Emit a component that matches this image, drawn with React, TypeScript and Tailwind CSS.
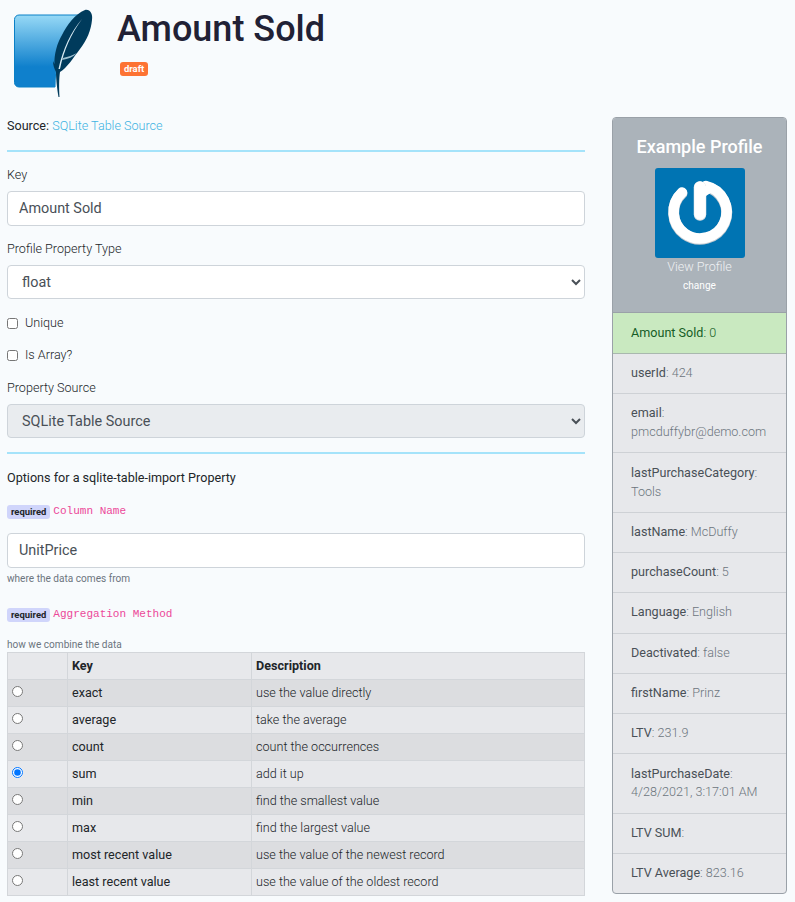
import React from "react"

const methods = [
  { key: "exact", description: "use the value directly" },
  { key: "average", description: "take the average" },
  { key: "count", description: "count the occurrences" },
  { key: "sum", description: "add it up" },
  { key: "min", description: "find the smallest value" },
  { key: "max", description: "find the largest value" },
  { key: "most recent value", description: "use the value of the newest record" },
  { key: "least recent value", description: "use the value of the oldest record" },
]

const properties = [
  { name: "userId", value: "424" },
  { name: "email", value: "pmcduffybr@demo.com" },
  { name: "lastPurchaseCategory", value: "Tools" },
  { name: "lastName", value: "McDuffy" },
  { name: "purchaseCount", value: "5" },
  { name: "Language", value: "English" },
  { name: "Deactivated", value: "false" },
  { name: "firstName", value: "Prinz" },
  { name: "LTV", value: "231.9" },
  { name: "lastPurchaseDate", value: "4/28/2021, 3:17:01 AM" },
  { name: "LTV SUM", value: "" },
  { name: "LTV Average", value: "823.16" },
]

const SqliteLogo = () => (
  <svg width="80" height="98" viewBox="0 0 80 98" className="block shrink-0">
    <defs>
      <linearGradient id="sq" x1="0" y1="0" x2="0" y2="1">
        <stop offset="0" stopColor="#97d9f6" />
        <stop offset="0.72" stopColor="#0f80cc" />
        <stop offset="1" stopColor="#0f80cc" />
      </linearGradient>
    </defs>
    <path
      d="M6 15H66C56 28 47 42 44 60C43 68 42 78 42 87H6A4.500 4.500 0 0 1 1.500 82.500V19.500A4.500 4.500 0 0 1 6 15z"
      fill="url(#sq)"
      stroke="#0b80c6"
      strokeWidth="1"
    />
    <path
      d="M72 10C77 9 80 14 79 20C78 30 74 40 67 49C60 58 54 68 47 72C46 78 46 88 46.500 97H45.500C44 88 43 78 43 72C41 68 40 65 40 61L41.500 64C41 55 44 43 49 35C54 25 62 14 72 10z"
      fill="#003b5c"
    />
    <path d="M69 19C58 32 50 48 45.500 69L47 69C51 50 58 34 69 19z" fill="#d9ecf4" />
    <path d="M50 58C55 57 60 55 64 53C60 57 55 59 49 60z" fill="#9fc2d2" />
  </svg>
)

const GrouparooLogo = () => (
  <div className="h-[90px] w-[90px] rounded-[3px] bg-[#0074b3]">
    <svg width="90" height="90" viewBox="0 0 90 90" fill="none" strokeLinecap="round">
      <path d="M27 24.500A26.500 26.500 0 1 0 51 18" stroke="#c3cad0" strokeWidth="11" transform="translate(0 0.800)" />
      <path d="M27 24.500A26.500 26.500 0 1 0 51 18" stroke="#ffffff" strokeWidth="10.500" />
      <path d="M45 19V46" stroke="#dfe3e6" strokeWidth="12.500" transform="translate(0 0.500)" />
      <path d="M45 19V46" stroke="#ffffff" strokeWidth="11.500" />
      <path d="M48 18L50 29C52 27 55 25 58 24L54 18z" fill="#ffffff" />
    </svg>
  </div>
)

const Required = ({ name }: { name: string }) => (
  <div className="flex h-[21px] items-center">
    <span className="rounded-[3px] bg-[#d0d5fb] px-[4px] text-[9.450px] leading-[14px] font-bold text-[#212529]">
      required
    </span>
    <code className="ml-[3px] font-['Liberation_Mono',monospace] text-[11.025px] text-[#ec4899]">
      {name}
    </code>
  </div>
)

const inputClass =
  "block h-[35px] w-full rounded-[4px] border border-[#ced4da] bg-white px-[11px] text-[14.400px] text-[#495057]"

const selectClass =
  "block h-[34px] w-full rounded-[4px] border border-[#ced4da] px-[10px] text-[14.400px] text-[#495057]"

export default function App() {
  return (
    <div className="h-[902px] overflow-hidden bg-[#f8fbfd] font-['Roboto',sans-serif] text-[12.600px] text-[#212529]">
      {/* Header */}
      <div className="flex h-[106px] pl-[13px]">
        <SqliteLogo />
        <div className="ml-[24px] pt-[7px]">
          <h1 className="text-[36px] leading-[44px] font-medium text-[#212135]">Amount Sold</h1>
          <span className="mt-[11px] ml-[3px] inline-block rounded-[3px] bg-[#fd7333] px-[4px] text-[9.450px] leading-[14px] font-bold text-white">
            draft
          </span>
        </div>
      </div>

      <div className="flex items-start">
        {/* Form */}
        <div className="ml-[7px] w-[578px]">
          <p className="mt-[9px] leading-[21px]">
            Source: <a className="font-light text-[#3fb3e2]">SQLite Table Source</a>
          </p>
          <hr className="mt-[14px] border-t-2 border-[#a5e3fa]" />

          <label className="mt-[13px] block leading-[20px] font-light">Key</label>
          <input className={`mt-[6px] ${inputClass}`} defaultValue="Amount Sold" />

          <label className="mt-[13px] block leading-[20px] font-light">Profile Property Type</label>
          <select className={`mt-[6px] bg-white ${selectClass}`} defaultValue="float">
            <option>float</option>
          </select>

          <label className="mt-[14px] flex h-[20px] items-center font-light">
            <input type="checkbox" className="m-0 h-[11px] w-[11px]" />
            <span className="ml-[7px]">Unique</span>
          </label>
          <label className="mt-[12px] flex h-[20px] items-center font-light">
            <input type="checkbox" className="m-0 h-[11px] w-[11px]" />
            <span className="ml-[7px]">Is Array?</span>
          </label>

          <label className="mt-[13px] block leading-[20px] font-light">Property Source</label>
          <select className={`mt-[6px] bg-[#e9ecef] ${selectClass}`} defaultValue="SQLite Table Source">
            <option>SQLite Table Source</option>
          </select>
          <hr className="mt-[14px] border-t-2 border-[#a5e3fa]" />

          <p className="mt-[14px] leading-[20px]">Options for a sqlite-table-import Property</p>

          <div className="mt-[13px]">
            <Required name="Column Name" />
          </div>
          <input className={`mt-[11px] ${inputClass}`} defaultValue="UnitPrice" />
          <p className="mt-[3px] text-[10.080px] leading-[15px] text-[#6c757d]">where the data comes from</p>

          <div className="mt-[18px]">
            <Required name="Aggregation Method" />
          </div>
          <p className="mt-[12px] text-[10.080px] leading-[15px] text-[#6c757d]">how we combine the data</p>

          <table className="w-full table-fixed border-collapse">
            <thead>
              <tr className="h-[27px] bg-[#e7e8eb]">
                <th className="w-[60px] border border-[#d3d6da]"></th>
                <th className="w-[184px] border border-[#d3d6da] px-[4px] text-left font-bold">Key</th>
                <th className="border border-[#d3d6da] px-[4px] text-left font-bold">Description</th>
              </tr>
            </thead>
            <tbody>
              {methods.map((m, i) => (
                <tr key={m.key} className={`h-[27px] ${i % 2 === 0 ? "bg-[#dcdde0]" : "bg-[#e7e8eb]"}`}>
                  <td className="border border-[#d3d6da] px-[4px]">
                    <input
                      type="radio"
                      name="aggregation"
                      defaultChecked={m.key === "sum"}
                      className="m-0 block h-[11px] w-[11px] -translate-y-[2px]"
                    />
                  </td>
                  <td className="border border-[#d3d6da] px-[4px]">{m.key}</td>
                  <td className="border border-[#d3d6da] px-[4px] font-light">{m.description}</td>
                </tr>
              ))}
            </tbody>
          </table>
        </div>

        {/* Example profile */}
        <div className="mt-[11px] ml-[27px] w-[175px] overflow-hidden rounded-[4px] border border-[#9aa1a8] bg-[#e7e8eb]">
          <div className="flex h-[195px] flex-col items-center border-b border-[#9aa1a8] bg-[#abb3ba] pt-[17px]">
            <h4 className="text-[18px] leading-[24px] font-medium text-white">Example Profile</h4>
            <div className="mt-[9px]">
              <GrouparooLogo />
            </div>
            <a className="text-[12.600px] leading-[17px] font-light text-[#eef0f2]">View Profile</a>
            <span className="mt-[3px] text-[10.080px] leading-[15px] text-white">change</span>
          </div>
          <div className="flex h-[41px] items-center border-b border-[#a9b8ae] bg-[#c9e9c0] px-[18px] text-[#155d26]">
            <span>
              Amount Sold<span className="font-light">: 0</span>
            </span>
          </div>
          {properties.map((p) => (
            <div
              key={p.name}
              className="border-b border-[#ced1d5] px-[18px] py-[10.200px] leading-[18.900px] font-light text-[#6c757d] last:border-b-0"
            >
              <span className="font-normal text-[#495057]">{p.name}</span>: {p.value}
            </div>
          ))}
        </div>
      </div>
    </div>
  )
}
